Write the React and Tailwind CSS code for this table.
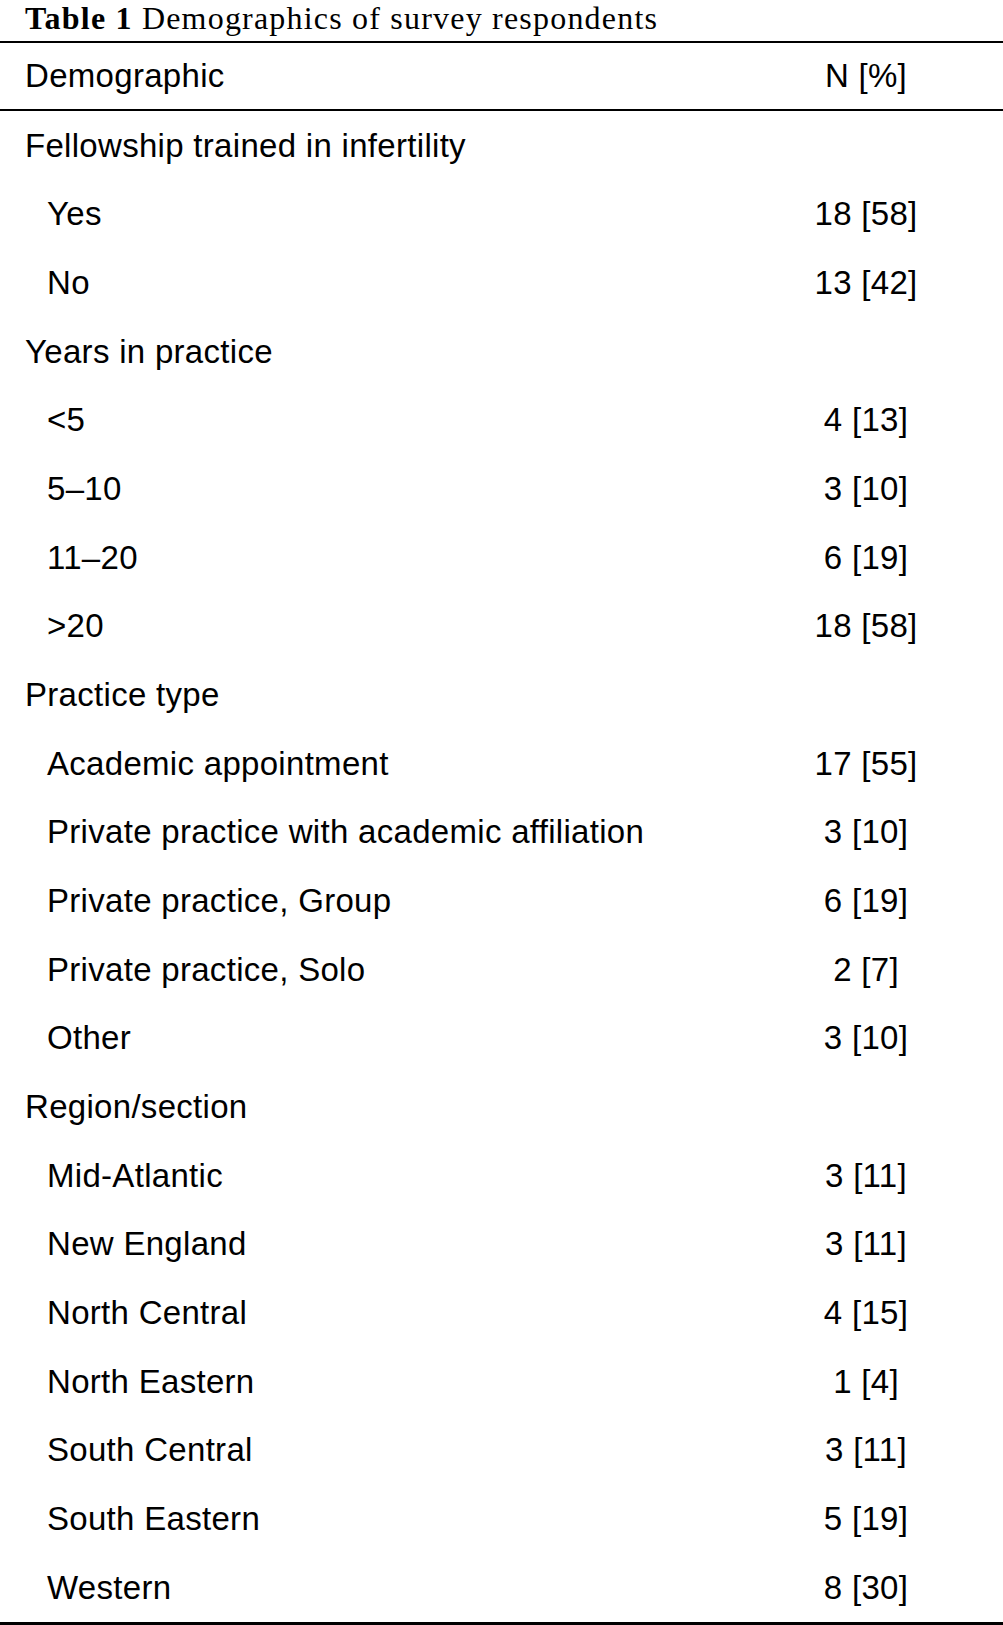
import React from 'react';

const rows = [
  { label: 'Fellowship trained in infertility', group: true },
  { label: 'Yes', value: '18 [58]' },
  { label: 'No', value: '13 [42]' },
  { label: 'Years in practice', group: true },
  { label: '<5', value: '4 [13]' },
  { label: '5–10', value: '3 [10]' },
  { label: '11–20', value: '6 [19]' },
  { label: '>20', value: '18 [58]' },
  { label: 'Practice type', group: true },
  { label: 'Academic appointment', value: '17 [55]' },
  { label: 'Private practice with academic affiliation', value: '3 [10]' },
  { label: 'Private practice, Group', value: '6 [19]' },
  { label: 'Private practice, Solo', value: '2 [7]' },
  { label: 'Other', value: '3 [10]' },
  { label: 'Region/section', group: true },
  { label: 'Mid-Atlantic', value: '3 [11]' },
  { label: 'New England', value: '3 [11]' },
  { label: 'North Central', value: '4 [15]' },
  { label: 'North Eastern', value: '1 [4]' },
  { label: 'South Central', value: '3 [11]' },
  { label: 'South Eastern', value: '5 [19]' },
  { label: 'Western', value: '8 [30]' },
];

export default function App() {
  return (
    <div className="w-[1003px] bg-white text-black">
      {/* caption */}
      <div className="h-[41px] pl-[25px] text-[32px] leading-[36px] tracking-[1.2px] font-['Liberation_Serif',serif] whitespace-nowrap">
        <span className="font-bold">Table 1</span> Demographics of survey respondents
      </div>

      <div className="border-t-2 border-b-[3px] border-black font-['Liberation_Sans',Arial,sans-serif] text-[33px] tracking-[0.3px]">
        <div className="grid grid-cols-[1fr_274px] items-center h-[68px] border-b-2 border-black">
          <div className="pl-[25px]">Demographic</div>
          <div className="text-center">N [%]</div>
        </div>

        {rows.map((row, i) => (
          <div key={i} className="grid grid-cols-[1fr_274px] items-center h-[68.68px]">
            <div className={row.group ? 'pl-[25px]' : 'pl-[47px]'}>{row.label}</div>
            <div className="text-center">{row.value || ''}</div>
          </div>
        ))}
      </div>
    </div>
  );
}
